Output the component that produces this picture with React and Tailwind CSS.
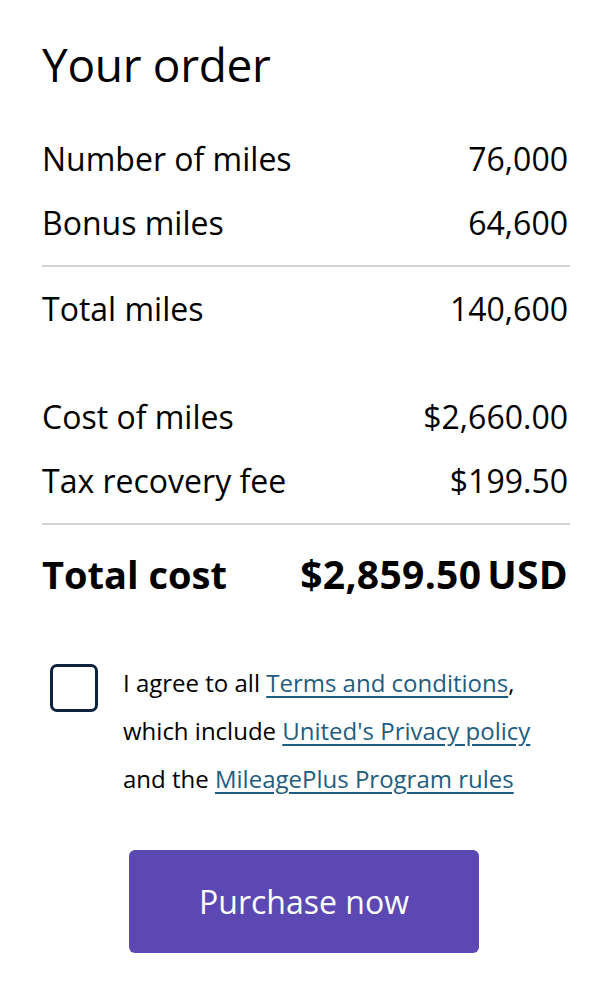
import React, { useState } from 'react'

const Row = ({ label, value }) => (
    <div className="flex justify-between items-center h-[64px] text-[32px]">
        <span>{label}</span>
        <span>{value}</span>
    </div>
)

const App = () => {
    const [agreed, setAgreed] = useState(false);

    return (
        <div className="min-h-screen bg-white text-black pl-[42px] pr-[44px] pt-[34px] pb-10" style={{ fontFamily: '"Open Sans", "Liberation Sans", sans-serif' }}>
            <h1 className="text-[46px] leading-[60px] font-medium tracking-[-0.3px]">Your order</h1>

            <div className="mt-[33px]">
                <Row label="Number of miles" value="76,000" />
                <Row label="Bonus miles" value="64,600" />
                <hr className="border-0 h-[2px] bg-[#d4d4d4] my-[10px] mr-[-2px]" />
                <Row label="Total miles" value="140,600" />
            </div>

            <div className="mt-[44px]">
                <Row label="Cost of miles" value="$2,660.00" />
                <Row label="Tax recovery fee" value="$199.50" />
                <hr className="border-0 h-[2px] bg-[#d4d4d4] my-[10px] mr-[-2px]" />
                <div className="flex justify-between items-center h-[64px] mt-[17px] font-bold">
                    <span className="text-[38px]">Total cost</span>
                    <span className="text-[39px] tracking-[0.3px]">$2,859.50<span className="ml-[6px]">USD</span></span>
                </div>
            </div>

            <div className="flex items-start mt-[53px] pl-[8px]">
                <button
                    type="button"
                    onClick={() => setAgreed(!agreed)}
                    className="shrink-0 w-[48px] h-[48px] mt-[5px] border-[3px] border-[#0c2340] rounded-[7px] bg-white"
                />
                <p className="ml-[25px] text-[24px] leading-[48px]">
                    I agree to all <a href="#" className="text-[#1f5d80] underline underline-offset-[4px]">Terms and conditions</a>,<br />
                    which include <a href="#" className="text-[#1f5d80] underline underline-offset-[4px]">United's Privacy policy</a><br />
                    and the <a href="#" className="text-[#1f5d80] underline underline-offset-[4px]">MileagePlus Program rules</a>
                </p>
            </div>

            <div className="flex justify-center mt-[47px]">
                <button type="button" className="w-[350px] h-[103px] rounded-[6px] bg-[#5c48b2] text-white text-[32px] ml-[-2px]">
                    Purchase now
                </button>
            </div>
        </div>
    )
}

export default App
